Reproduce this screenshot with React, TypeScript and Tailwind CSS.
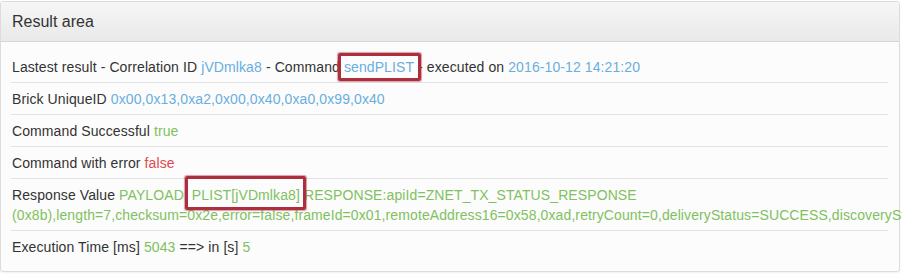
const rows = "border-t border-[#e3e3e3] px-px py-[5.5px] leading-5";

function Marked({ children, box }: { children: React.ReactNode; box: string }) {
  return (
    <span className="relative">
      {children}
      <span
        className={`pointer-events-none absolute rounded-[2px] border-[3px] border-[#ad2f3e] shadow-[0_0_1px_1px_rgba(173,47,62,0.45)] ${box}`}
      />
    </span>
  );
}

export default function App() {
  return (
    <div className="h-[275px] w-full overflow-hidden bg-white font-['Liberation_Sans',Arial,sans-serif] text-[14px] tracking-[0.1px] text-[#333]">
      <div className="mt-px w-[900px] rounded-[3px] border border-[#dcdcdc] bg-[#fcfcfc] shadow-[0_1px_2px_rgba(0,0,0,0.06)]">
        <div className="flex h-10 items-center border-b border-[#d6d6d6] bg-gradient-to-b from-[#f6f6f6] to-[#e9e9e9] px-[11px] text-[16px] tracking-normal">
          Result area
        </div>
        <div className="pb-[9px] pl-[10px] pr-[11px] pt-[9px]">
          <div className="px-px py-[5.5px] leading-5">
            Lastest result - Correlation ID <span className="text-[#6aaedf]">jVDmlka8</span> - Command{" "}
            <Marked box="-bottom-[6px] -left-[6px] -right-[7px] -top-[6px]">
              <span className="text-[#6aaedf]">sendPLIST</span>
            </Marked>{" "}
            - executed on <span className="text-[#6aaedf]">2016-10-12 14:21:20</span>
          </div>
          <div className={rows}>
            Brick UniqueID <span className="text-[#6aaedf]">0x00,0x13,0xa2,0x00,0x40,0xa0,0x99,0x40</span>
          </div>
          <div className={rows}>
            Command Successful <span className="text-[#80c15e]">true</span>
          </div>
          <div className={rows}>
            Command with error <span className="text-[#e2494e]">false</span>
          </div>
          <div className={rows}>
            Response Value{" "}
            <span className="text-[#80c15e]">
              PAYLOAD:{" "}
              <Marked box="-bottom-[7px] -left-[7px] -right-[6px] -top-[11px]">PLIST[jVDmlka8]</Marked>{" "}
              RESPONSE:apiId=ZNET_TX_STATUS_RESPONSE
              (0x8b),length=7,checksum=0x2e,error=false,frameId=0x01,remoteAddress16=0x58,0xad,retryCount=0,deliveryStatus=SUCCESS,discoveryStatus=NO_DISCOVERY
            </span>
          </div>
          <div className={rows}>
            Execution Time [ms] <span className="text-[#80c15e]">5043</span> ==&gt; in [s]{" "}
            <span className="text-[#80c15e]">5</span>
          </div>
        </div>
      </div>
    </div>
  );
}
